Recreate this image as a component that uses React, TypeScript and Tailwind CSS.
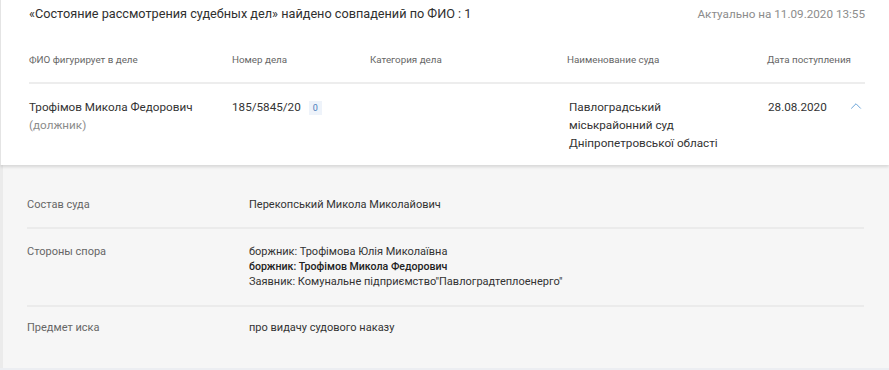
import { ChevronUp } from "lucide-react";

const columns = [
  "ФИО фигурирует в деле",
  "Номер дела",
  "Категория дела",
  "Наименование суда",
  "Дата поступления",
];

export default function App() {
  return (
    <div className="w-[889px] h-[370px] overflow-hidden bg-white font-['Roboto',sans-serif] text-[#333]">
      {/* Card */}
      <div className="relative z-10 bg-white border-l border-[#e4e4e4] shadow-[0_2px_3px_rgba(0,0,0,0.13)]">
        <div className="flex items-center justify-between pl-[28px] pr-[24px] pt-[5px]">
          <h1 className="text-[12.7px] leading-[18px] text-[#2f2f2f]">
            «Состояние рассмотрения судебных дел» найдено совпадений по ФИО : 1
          </h1>
          <span className="text-[11.7px] leading-[18px] text-[#8c8c8c]">
            Актуально на 11.09.2020 13:55
          </span>
        </div>

        {/* Table header */}
        <div className="ml-[28px] mr-[24px] mt-[30px] grid grid-cols-[203px_138px_197px_200px_1fr] border-b-2 border-[#ededed] pb-[15px] text-[9.8px] leading-[14px] text-[#666]">
          {columns.map((c) => (
            <div key={c}>{c}</div>
          ))}
        </div>

        {/* Data row */}
        <div className="ml-[28px] mr-[24px] grid grid-cols-[203px_138px_197px_200px_1fr] pt-[14px] pb-[13px] text-[11.7px] leading-[18px] text-[#333]">
          <div>
            <div>Трофімов Микола Федорович</div>
            <div className="text-[#8c8c8c]">(должник)</div>
          </div>
          <div className="flex items-start gap-[8px]">
            <span>185/5845/20</span>
            <span className="mt-[3px] flex h-[14px] w-[13px] items-center justify-center bg-[#eef3fa] text-[9px] leading-none text-[#4a7dba]">
              0
            </span>
          </div>
          <div />
          <div className="pl-[2px]">
            <div>Павлоградський</div>
            <div>міськрайонний суд</div>
            <div>Дніпропетровської області</div>
          </div>
          <div className="flex items-start justify-between pl-[1px]">
            <span>28.08.2020</span>
            <ChevronUp className="-mt-[1px] h-[18px] w-[18px] text-[#5a9ad4]" strokeWidth={1.2} />
          </div>
        </div>
      </div>

      {/* Details panel */}
      <div className="h-[203px] border-l-[3px] border-[#ebebeb] bg-[#f6f6f6] pl-[24px] pr-[25px] pt-[16px] text-[11px] leading-[15px]">
        <div className="grid grid-cols-[222px_1fr] border-b-2 border-[#ebebeb] pt-[16px] pb-[15px]">
          <div className="text-[#666]">Состав суда</div>
          <div>Перекопський Микола Миколайович</div>
        </div>
        <div className="grid grid-cols-[222px_1fr] border-b-2 border-[#ebebeb] pt-[15px] pb-[16px]">
          <div className="text-[#666]">Стороны спора</div>
          <div>
            <div>боржник: Трофімова Юлія Миколаївна</div>
            <div className="text-[10.6px] font-medium text-[#222]">боржник: Трофімов Микола Федорович</div>
            <div>Заявник: Комунальне підприємство"Павлоградтеплоенерго"</div>
          </div>
        </div>
        <div className="grid grid-cols-[222px_1fr] pt-[13px]">
          <div className="text-[#666]">Предмет иска</div>
          <div>про видачу судового наказу</div>
        </div>
      </div>
      <div className="h-[2px] bg-[#eceef2]" />
    </div>
  );
}
